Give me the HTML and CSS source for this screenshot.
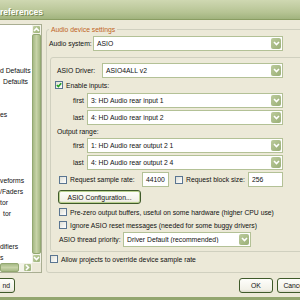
FILE: index.html
```html
<!DOCTYPE html>
<html lang="en">
<head>
    <meta charset="UTF-8">
    <title>Preferences</title>
    <link rel="stylesheet" href="styles.css">
</head>
<body>

<div class="window">
    <div class="titlebar"><span class="title">references</span></div>

    <div class="client">
        <div class="tree">
            <ul class="tree-items">
                <li>d Defaults</li>
                <li class="indent">Defaults</li>
                <li></li>
                <li></li>
                <li>es</li>
                <li></li>
                <li></li>
                <li></li>
                <li></li>
                <li></li>
                <li>veforms</li>
                <li>/Faders</li>
                <li>tor</li>
                <li class="indent">tor</li>
                <li></li>
                <li></li>
                <li>difiers</li>
                <li>s</li>
            </ul>
            <div class="vscroll">
                <div class="sb-btn">
                    <svg width="7" height="5" viewBox="0 0 7 5"><polyline points="1,4 3.5,1.5 6,4" fill="none" stroke="#fff" stroke-width="1.6"/></svg>
                </div>
                <div class="sb-thumb"></div>
                <div class="sb-btn">
                    <svg width="7" height="5" viewBox="0 0 7 5"><polyline points="1,1 3.5,3.5 6,1" fill="none" stroke="#fff" stroke-width="1.6"/></svg>
                </div>
            </div>
            <div class="hscroll">
                <div class="sb-thumb h"></div>
                <div class="sb-track"></div>
                <div class="sb-btn">
                    <svg width="5" height="7" viewBox="0 0 5 7"><polyline points="1,1 3.5,3.5 1,6" fill="none" stroke="#fff" stroke-width="1.6"/></svg>
                </div>
            </div>
            <div class="corner"></div>
        </div>

        <fieldset class="group">
            <legend>Audio device settings</legend>

            <div class="row system-row">
                <span class="lbl w-system">Audio system:</span>
                <div class="combo w190"><span class="value">ASIO</span><span class="drop"><svg width="7" height="5" viewBox="0 0 7 5"><polyline points="1,1 3.5,3.5 6,1" fill="none" stroke="#fff" stroke-width="1.6"/></svg></span></div>
            </div>

            <div class="inner">
                <div class="row driver-row">
                    <span class="lbl w-driver">ASIO Driver:</span>
                    <div class="combo w181"><span class="value">ASIO4ALL v2</span><span class="drop"><svg width="7" height="5" viewBox="0 0 7 5"><polyline points="1,1 3.5,3.5 6,1" fill="none" stroke="#fff" stroke-width="1.6"/></svg></span></div>
                </div>

                <label class="check enable-row">
                    <span class="box checked"><svg width="6" height="6" viewBox="0 0 6 6"><polyline points="0.8,3 2.4,4.6 5.2,1.2" fill="none" stroke="#21a121" stroke-width="1.5"/></svg></span>
                    Enable inputs:
                </label>

                <div class="row range-row">
                    <span class="lbl w-range">first</span>
                    <div class="combo w196"><span class="value">3: HD Audio rear input 1</span><span class="drop"><svg width="7" height="5" viewBox="0 0 7 5"><polyline points="1,1 3.5,3.5 6,1" fill="none" stroke="#fff" stroke-width="1.6"/></svg></span></div>
                </div>
                <div class="row range-row tight">
                    <span class="lbl w-range">last</span>
                    <div class="combo w196"><span class="value">4: HD Audio rear input 2</span><span class="drop"><svg width="7" height="5" viewBox="0 0 7 5"><polyline points="1,1 3.5,3.5 6,1" fill="none" stroke="#fff" stroke-width="1.6"/></svg></span></div>
                </div>

                <div class="caption">Output range:</div>

                <div class="row range-row tight">
                    <span class="lbl w-range">first</span>
                    <div class="combo w196"><span class="value">1: HD Audio rear output 2 1</span><span class="drop"><svg width="7" height="5" viewBox="0 0 7 5"><polyline points="1,1 3.5,3.5 6,1" fill="none" stroke="#fff" stroke-width="1.6"/></svg></span></div>
                </div>
                <div class="row range-row tight">
                    <span class="lbl w-range">last</span>
                    <div class="combo w196"><span class="value">4: HD Audio rear output 2 4</span><span class="drop"><svg width="7" height="5" viewBox="0 0 7 5"><polyline points="1,1 3.5,3.5 6,1" fill="none" stroke="#fff" stroke-width="1.6"/></svg></span></div>
                </div>

                <div class="row request-row">
                    <span class="box"></span>
                    <span class="lbl w-rate">Request sample rate:</span>
                    <div class="edit w27">44100</div>
                    <span class="box block-box"></span>
                    <span class="lbl w-block">Request block size:</span>
                    <div class="edit w35">256</div>
                </div>

                <button class="btn config-btn">ASIO Configuration...</button>

                <label class="check option-row">
                    <span class="box"></span>
                    Pre-zero output buffers, useful on some hardware (higher CPU use)
                </label>
                <label class="check option-row">
                    <span class="box"></span>
                    Ignore ASIO reset messages (needed for some buggy drivers)
                </label>

                <div class="row priority-row">
                    <span class="lbl w-priority">ASIO thread priority:</span>
                    <div class="combo w128"><span class="value">Driver Default (recommended)</span><span class="drop"><svg width="7" height="5" viewBox="0 0 7 5"><polyline points="1,1 3.5,3.5 6,1" fill="none" stroke="#fff" stroke-width="1.6"/></svg></span></div>
                </div>
            </div>

            <label class="check allow-row">
                <span class="box"></span>
                Allow projects to override device sample rate
            </label>
        </fieldset>
    </div>

    <div class="buttons">
        <button class="btn find-btn">nd</button>
        <button class="btn ok-btn">OK</button>
        <button class="btn cancel-btn">Cancel</button>
    </div>
</div>

</body>
</html>
```

FILE: styles.css
```css
body {
    margin: 0;
    width: 300px;
    height: 300px;
    overflow: hidden;
    background: #ece9d8;
    font-family: "Liberation Sans", Arial, sans-serif;
    font-size: 6.8px;
    color: #111;
}

.window {
    width: 380px;
    height: 300px;
    display: flex;
    flex-direction: column;
    background: #ece9d8;
    border-bottom: 3px solid #93a66f;
    box-sizing: border-box;
}

/* Title bar */
.titlebar {
    height: 20px;
    flex-shrink: 0;
    display: flex;
    align-items: center;
    padding-top: 5px;
    box-sizing: border-box;
    background: linear-gradient(180deg, #cfd8b2 0%, #c2cda2 35%, #b6c494 65%, #a1b37e 100%);
    border-bottom: 1px solid #8a9d63;
}

.title {
    color: #fff;
    font-size: 8.5px;
    font-weight: bold;
    text-shadow: 1px 1px 0 #74864f;
}

.client {
    display: flex;
    padding-top: 4px;
}

/* Tree on the left */
.tree {
    width: 41px;
    height: 247px;
    flex-shrink: 0;
    display: grid;
    grid-template-columns: 32px 9px;
    grid-template-rows: 238px 9px;
    background: #fff;
    border-top: 1px solid #a9ae92;
    border-right: 1px solid #a9ae92;
    border-bottom: 1px solid #a9ae92;
}

.tree-items {
    list-style: none;
    margin: 0;
    padding: 40px 0 0 0;
    overflow: hidden;
    white-space: nowrap;
}

.tree-items li {
    height: 11px;
    line-height: 11px;
}

.tree-items .indent {
    padding-left: 3px;
}

.vscroll {
    display: flex;
    flex-direction: column;
    background: #f4f4ea;
}

.hscroll {
    display: flex;
    background: #f4f4ea;
}

.sb-btn {
    width: 9px;
    height: 9px;
    flex-shrink: 0;
    display: flex;
    align-items: center;
    justify-content: center;
    border-radius: 2px;
    background: linear-gradient(135deg, #c0cfa0, #9db27a);
    box-sizing: border-box;
    border: 1px solid #f4f4ea;
}

.sb-thumb {
    flex: 1;
    border-radius: 2px;
    background: linear-gradient(90deg, #a6b985, #c7d3a8 50%, #a6b985);
    border: 1px solid #93a872;
}

.sb-thumb.h {
    flex: none;
    width: 17px;
    background: linear-gradient(180deg, #a6b985, #c7d3a8 50%, #a6b985);
}

.sb-track {
    flex: 1;
}

.corner {
    background: #ece9d8;
}

/* Audio device group */
.group {
    margin: 1px 0 0 4px;
    padding: 0 0 3px 0;
    width: 300px;
    border: 1px solid #d0d0bf;
    border-radius: 3px;
}

.group legend {
    margin-left: 2px;
    padding: 0 2px;
    line-height: 9px;
    color: #c0641f;
}

.row {
    display: flex;
    align-items: center;
    white-space: nowrap;
}

.lbl {
    flex-shrink: 0;
}

.system-row {
    margin-top: 2px;
    padding-left: 2px;
}

.w-system { width: 44px; }
.w-driver { width: 45px; }
.w-range { width: 14px; }
.w-rate { width: 72px; }
.w-block { width: 62px; }
.w-priority { width: 64px; }

.combo {
    height: 15px;
    box-sizing: border-box;
    display: flex;
    align-items: center;
    background: #fff;
    border: 1px solid #b3c196;
}

.combo .value {
    flex: 1;
    padding-left: 3px;
    overflow: hidden;
}

.combo .drop {
    width: 10px;
    height: 11px;
    margin-right: 1px;
    display: flex;
    align-items: center;
    justify-content: center;
    border-radius: 2px;
    background: linear-gradient(135deg, #bccb9c, #9aaf77);
}

.w190 { width: 190px; }
.w181 { width: 181px; }
.w196 { width: 196px; }
.w128 { width: 128px; }

.inner {
    margin: 6px 0 0 3px;
    padding-bottom: 4px;
    border: 1px solid #d0d0bf;
    border-radius: 3px;
}

.driver-row {
    margin-top: 5px;
    padding-left: 6px;
}

.check {
    display: flex;
    align-items: center;
    height: 10px;
    white-space: nowrap;
}

.box {
    width: 8px;
    height: 8px;
    flex-shrink: 0;
    box-sizing: border-box;
    margin-right: 3px;
    display: flex;
    align-items: center;
    justify-content: center;
    border: 1px solid #5a7591;
    background: linear-gradient(135deg, #dedfd6, #fff);
}

.enable-row {
    margin-top: 2px;
    padding-left: 4px;
}

.range-row {
    margin-top: 3px;
    padding-left: 22px;
}

.range-row.tight {
    margin-top: 2px;
}

.caption {
    margin-top: 2px;
    padding-left: 6px;
    height: 9px;
    line-height: 9px;
}

.request-row {
    margin-top: 2px;
    padding-left: 8px;
}

.edit {
    height: 15px;
    box-sizing: border-box;
    padding-left: 3px;
    line-height: 13px;
    background: #fff;
    border: 1px solid #b3c196;
}

.w27 { width: 27px; }
.w35 { width: 35px; }

.block-box {
    margin-left: 6px;
}

.btn {
    height: 15px;
    padding: 0;
    font-family: "Liberation Sans", Arial, sans-serif;
    font-size: 6.8px;
    color: #111;
    border: 1px solid #3f5a2a;
    border-radius: 3px;
    background: linear-gradient(180deg, #fefefb, #f2f1e8 80%, #dcdacb);
}

.config-btn {
    display: block;
    margin: 3px 0 0 7px;
    width: 83px;
    height: 14px;
    box-shadow: inset 0 0 0 1px #b9d08f;
}

.option-row {
    margin-top: 3px;
    padding-left: 8px;
}

.priority-row {
    margin-top: 2px;
    padding-left: 8px;
}

.allow-row {
    margin-top: 2px;
    padding-left: 3px;
}

/* Dialog buttons */
.buttons {
    display: flex;
    margin-top: 5px;
}

.find-btn {
    width: 35px;
    margin-left: -20px;
    text-align: right;
    padding-right: 4px;
}

.ok-btn {
    width: 34px;
    margin-left: 224px;
}

.cancel-btn {
    width: 34px;
    margin-left: 4px;
}
```
